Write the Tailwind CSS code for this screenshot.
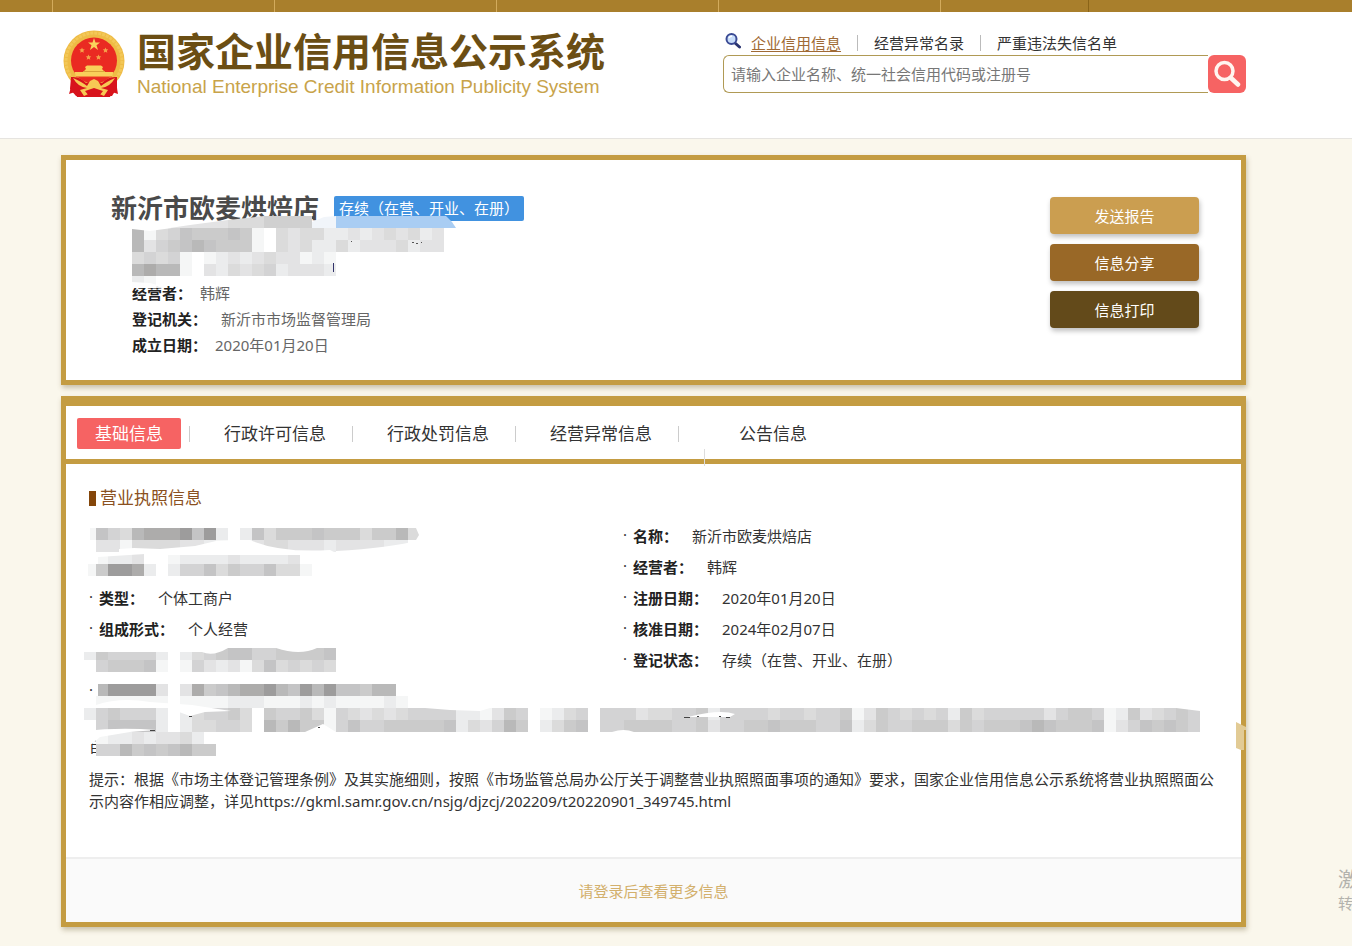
<!DOCTYPE html>
<html lang="zh-CN">
<head>
<meta charset="utf-8">
<meta name="viewport" content="width=device-width, initial-scale=1">
<title>国家企业信用信息公示系统</title>
<script src="https://cdn.jsdelivr.net/npm/@tailwindcss/browser@4"></script>
</head>
<body class="relative min-h-screen overflow-x-hidden bg-[#faf7ec] font-['Noto_Sans','Noto_Sans_CJK_SC',sans-serif] text-[15px] leading-[22px] text-[#333]">

<!-- Top navigation strip -->
<nav class="flex h-3 bg-[#a97f2c] pl-[52px]" aria-label="主导航">
  <span class="w-[222px] border-l border-[#d3ab5c]"></span>
  <span class="w-[222px] border-l border-[#d3ab5c]"></span>
  <span class="w-[222px] border-l border-[#d3ab5c]"></span>
  <span class="w-[222px] border-l border-[#d3ab5c]"></span>
  <span class="w-[149px] border-x border-l-[#d3ab5c] border-r-[#8a6418]"></span>
</nav>

<header class="flex h-[127px] justify-between border-b border-[#e6e4e0] bg-white pr-[106px] pl-[62px]">
  <div class="flex gap-3 pt-[18px]">
    <!-- National emblem -->
    <svg class="h-[70px] w-[63px]" viewBox="0 0 63 70" aria-hidden="true">
      <path d="M9 46 L55 46 C54 53 55 59 56 64 L50 62 L48 67 L15 67 L13 62 L7 64 C9 58 10 52 9 46Z" fill="#d8131c"/>
      <circle cx="32" cy="31" r="30.500" fill="#eebb45"/>
      <circle cx="32" cy="31" r="28" fill="none" stroke="#f3c858" stroke-width="3" stroke-dasharray="3 1"/>
      <path d="M9 47 Q18 46 24 53 L32 50 L40 53 Q46 46 55 47 L55 58 L50 66 L14 66 L8 59Z" fill="#d8131c"/>
      <circle cx="32" cy="30.500" r="23" fill="#ea2a22"/>
      <path d="M32 8 L33.500 12.500 L38 12.500 L34.500 15.200 L36 20 L32 17 L28 20 L29.500 15.200 L26 12.500 L30.500 12.500Z" fill="#fad45c"/>
      <g fill="#f5a24b">
        <path id="s" d="M20 17.500 l.8 1.800 2 .2 -1.500 1.300 .5 2 -1.800 -1.100 -1.800 1.100 .5 -2 -1.500 -1.300 2 -.2z"/>
        <use href="#s" x="6.500" y="7"/><use href="#s" x="16.500" y="7"/><use href="#s" x="23.500"/>
      </g>
      <path d="M23 37 L25 35.500 L39 35.500 L41 37 L40 39 L43 42 L51.500 42 L50 47 L14 47 L12.500 42 L21 42 L24 39Z" fill="#f9cf5a"/>
      <path d="M21 41.500 H43" stroke="#d9a33a"/>
      <path d="M14 47 H50" stroke="#ea3a22"/>
      <path d="M11 48 Q20 52 25 56 L28 51 L32 49 L36 51 L39 56 Q44 52 53 48 Q48 57 39 58 L46 60 L42 66 L37 66 L41 61 L32 58 L23 61 L27 66 L22 66 L18 60 L25 58 Q16 57 11 48Z" fill="#f7c954"/>
      <path d="M22 66 Q32 60 42 66Z" fill="#d8131c"/>
    </svg>
    <div>
      <h1 class="h-[45px] font-['Noto_Sans_CJK_SC',sans-serif] text-[39px] leading-[38px] font-bold whitespace-nowrap text-[#6b4e14]">国家企业信用信息公示系统</h1>
      <p class="font-['Liberation_Sans',sans-serif] text-[19px] leading-[24px] whitespace-nowrap text-[#c8a34a]">National Enterprise Credit Information Publicity System</p>
    </div>
  </div>

  <form class="w-[523px] pt-[18px]">
    <div class="flex h-[25px] items-center pl-0.5 whitespace-nowrap text-[#333]">
      <svg class="mr-[10px] mb-1 size-4" viewBox="0 0 16 16" aria-hidden="true">
        <path d="M10 10 L14.500 14" stroke="#2a3470" stroke-width="3" stroke-linecap="round"/>
        <circle cx="6.500" cy="6" r="5" fill="#c9defa" stroke="#3a4a94" stroke-width="2"/>
        <path d="M4 5 Q5 3 7 3.200" stroke="#fff" stroke-width="1.500" fill="none"/>
      </svg>
      <a href="#" class="text-[#a06a35] underline underline-offset-2">企业信用信息</a>
      <span class="mx-4 h-4 w-px bg-[#bbb]"></span>
      <a href="#">经营异常名录</a>
      <span class="mx-4 h-4 w-px bg-[#bbb]"></span>
      <a href="#">严重违法失信名单</a>
    </div>
    <div class="flex h-[38px]">
      <input type="text" aria-label="搜索企业" placeholder="请输入企业名称、统一社会信用代码或注册号" class="min-w-0 flex-1 rounded-l-md border border-r-0 border-[#b09a55] bg-white px-[7px] outline-none placeholder:text-[#777]">
      <button type="button" aria-label="搜索" class="flex w-[38px] items-center justify-center rounded-md bg-[#f66363]">
        <svg class="size-7" viewBox="0 0 28 28" fill="none" stroke="#fff5f0" aria-hidden="true">
          <circle cx="11.500" cy="11" r="8.500" stroke-width="3.500"/>
          <path d="M18 18 L25 24.500" stroke-width="4.500" stroke-linecap="round"/>
        </svg>
      </button>
    </div>
  </form>
</header>

<main class="pt-4 pr-[106px] pb-[18px] pl-[61px]">

  <!-- Company summary -->
  <section class="relative flex h-[230px] justify-between border-5 border-[#c49c42] bg-white pt-[37px] pr-[42px] pl-[45px] shadow-[1px_3px_5px_rgba(90,70,20,0.3)]">
    <div>
      <div class="flex items-start">
        <h2 class="text-[26px] leading-[22px] font-bold text-[#4a4a4a]">新沂市欧麦烘焙店</h2>
        <span class="-mt-px ml-[15px] h-[25px] rounded-xs bg-[#4192e0] px-[5px] leading-[25px] text-white">存续（在营、开业、在册）</span>
      </div>
      <dl class="mt-[59px] pl-[21px] leading-[26px] text-[#666]">
        <div class="flex"><dt class="font-bold text-[#222]">经营者：</dt><dd class="ml-2">韩辉</dd></div>
        <div class="flex"><dt class="font-bold text-[#222]">登记机关：</dt><dd class="ml-[14px]">新沂市市场监督管理局</dd></div>
        <div class="flex"><dt class="font-bold text-[#222]">成立日期：</dt><dd class="ml-2">2020年01月20日</dd></div>
      </dl>
    </div>
    <div class="flex w-[149px] flex-col gap-[10px] text-white">
      <button type="button" class="h-[37px] rounded-sm bg-[#cb9e50] shadow-[1px_3px_5px_rgba(0,0,0,0.25)]">发送报告</button>
      <button type="button" class="h-[37px] rounded-sm bg-[#996827] shadow-[1px_3px_5px_rgba(0,0,0,0.25)]">信息分享</button>
      <button type="button" class="h-[37px] rounded-sm bg-[#634a1a] shadow-[1px_3px_5px_rgba(0,0,0,0.25)]">信息打印</button>
    </div>
    <!-- Pixelated private fields -->
    <svg class="pointer-events-none absolute top-[56px] left-[66px] h-[72px] w-[336px]" viewBox="132 216 336 72" shape-rendering="crispEdges" aria-hidden="true">
      <g data-x="132" data-y="228" data-rows="2965344434 9.67668878767687|2754323444 9.67688687776877|65659.9878 7677989|21229.7867 6587778|89"></g>
      <g shape-rendering="auto">
        <path d="M170 228 L190 225 L228 220 V228Z" fill="#e3e3e4"/>
        <path d="M228 220 L264 216 V228 H228Z" fill="#dbdbdb"/>
        <path d="M264 216 H312 V228 H264Z" fill="#d0d0d0"/>
        <path d="M312 222 L324 217 L336 216 V228 H312Z" fill="#f1f5fa"/>
        <path d="M336 216 H446 L452 222 L456 228 H336Z" fill="#a9cdf3"/>
        <path d="M132 228 H172 L150 231 L132 229Z" fill="#fff"/>
        <path d="M132 288 V282 L150 283 L168 288Z" fill="#fff" opacity="0.900"/>
      </g>
      <path d="M333 263 V272" stroke="#33336b"/>
      <path d="M351 241 h1 M412 242 h2 M416 243 h2 M421 242 h1" stroke="#555"/>
    </svg>
  </section>

  <!-- Registration details -->
  <section class="relative mt-[11px] border-5 border-t-10 border-[#c49c42] bg-white shadow-[1px_3px_5px_rgba(90,70,20,0.3)]">
    <div class="relative flex h-[58px] items-start border-b-5 border-[#c49c42] pt-3 pl-[11px] text-[17px]" role="tablist">
      <button type="button" role="tab" aria-selected="true" class="h-[31px] w-[104px] rounded-xs bg-[#f66363] text-white">基础信息</button>
      <span class="mt-2 ml-2 h-4 w-px bg-[#ccc]"></span>
      <button type="button" role="tab" class="h-[31px] w-[162px] pl-2">行政许可信息</button>
      <span class="mt-2 h-4 w-px bg-[#ccc]"></span>
      <button type="button" role="tab" class="h-[31px] w-[162px] pl-2">行政处罚信息</button>
      <span class="mt-2 h-4 w-px bg-[#ccc]"></span>
      <button type="button" role="tab" class="h-[31px] w-[162px] pl-2">经营异常信息</button>
      <span class="mt-2 h-4 w-px bg-[#ccc]"></span>
      <button type="button" role="tab" class="h-[31px] w-[188px]">公告信息</button>
      <span class="absolute top-[43px] left-[638px] h-[17px] w-px bg-[#ddd]"></span>
    </div>

    <div class="pt-[22px] pr-[22px] pb-[45px] pl-[23px]">
      <h3 class="flex h-6 items-center gap-1 text-[17px] text-[#8a5020]"><span class="h-[15px] w-[7px] bg-[#84460a]"></span>营业执照信息</h3>
      <div class="mt-[11px] grid grid-cols-[534fr_596fr]">
        <dl class="pt-[62px] pb-[31px] leading-[31px]">
          <div class="flex"><span class="-mt-0.5 w-[10px]">·</span><dt class="font-bold text-[#222]">类型：</dt><dd class="ml-[14px]">个体工商户</dd></div>
          <div class="flex"><span class="-mt-0.5 w-[10px]">·</span><dt class="font-bold text-[#222]">组成形式：</dt><dd class="ml-[14px]">个人经营</dd></div>
          <div class="flex pt-[31px]"><span class="-mt-0.5 w-[10px]">·</span></div>
        </dl>
        <dl class="leading-[31px]">
          <div class="flex"><span class="-mt-0.5 w-[10px]">·</span><dt class="font-bold text-[#222]">名称：</dt><dd class="ml-[14px]">新沂市欧麦烘焙店</dd></div>
          <div class="flex"><span class="-mt-0.5 w-[10px]">·</span><dt class="font-bold text-[#222]">经营者：</dt><dd class="ml-[14px]">韩辉</dd></div>
          <div class="flex"><span class="-mt-0.5 w-[10px]">·</span><dt class="font-bold text-[#222]">注册日期：</dt><dd class="ml-[14px]">2020年01月20日</dd></div>
          <div class="flex"><span class="-mt-0.5 w-[10px]">·</span><dt class="font-bold text-[#222]">核准日期：</dt><dd class="ml-[14px]">2024年02月07日</dd></div>
          <div class="flex"><span class="-mt-0.5 w-[10px]">·</span><dt class="font-bold text-[#222]">登记状态：</dt><dd class="ml-[14px]">存续（在营、开业、在册）</dd></div>
        </dl>
      </div>
      <p class="-mt-[31px] h-[63px] pt-[30px]">目</p>
      <p>提示：根据《市场主体登记管理条例》及其实施细则，按照《市场监管总局办公厅关于调整营业执照照面事项的通知》要求，国家企业信用信息公示系统将营业执照照面公示内容作相应调整，详见https://gkml.samr.gov.cn/nsjg/djzcj/202209/t20220901_349745.html</p>
    </div>

    <div class="flex h-[65px] items-center justify-center border-t-2 border-[#eee] bg-[#fafafa]">
      <a href="#" class="text-[#d3b06c]">请登录后查看更多信息</a>
    </div>

    <!-- Pixelated private fields -->
    <svg class="pointer-events-none absolute top-[122px] left-[18px] h-[228px] w-[1116px]" viewBox="84 528 1116 228" shape-rendering="crispEdges" aria-hidden="true">
      <g data-x="84" data-y="528" data-rows="93562111030 8.8364443444644 26|.77966667789.97667778777788|.9887..98888788887|94001 8.8553645536 69"></g>
      <g data-x="84" data-y="648" data-rows="84555 58.8654335544443|.54443 9.957879636565 6"></g>
      <g data-x="84" data-y="684" data-rows=".200007.714321102302033422|.999999.9999888999898999989|8545558 .865546 .455469 5676765555 889745. 9865. 5557665548 5555655655 497456565 8465555 575445 98476545|.533338 .866556 .242449 5355444443 867524. 8643. 5544445547 5544344455 386455444 6454443 234443 97534345"></g>
      <g data-x="84" data-y="732" data-rows=".988787768|.5524343244"></g>
      <g fill="#fff" shape-rendering="auto">
        <path d="M84 528 H90 V540 H84Z M119 552 V549 L134 548 L160 549 L195 546 L216 541 L240 540 V552Z M250 540 Q280 553 330 550 L334 552 H240 V540Z M336 551 Q390 548 420 540 V552 H336Z M416 528 h4 v12 h-4 l3 -5z"/>
        <path d="M84 552 H145 V554 L98 557 V564 H84Z M168 552 H312 V555 H168Z M84 564 h4 v12 h-4z"/>
        <path d="M84 648 H168 V652 H84Z M180 648 H228 Q213 657 202 652 H180Z M276 648 H317 Q300 656 276 648Z M84 660 h12 v12 h-12z"/>
        <path d="M96 684 h2 v12 h-2z M96 705 Q120 697 150 702 L192 705 L231 711 L205 712 L190 716 L168 708 H84 V705Z M425 708 H490 L480 711 L450 710Z M305 732 L323 724 L336 732Z M84 731 Q120 727 156 730 L130 732 L100 737 L92 744 H84Z M688 717 Q720 709 735 714 L730 717Z M1176 708 H1200 V711Z M612 732 Q624 728 634 732Z"/>
      </g>
      <path d="M189 716 h3 M318 727 h2 M684 717 h6 M697 716 h2 M719 716 h2 M726 717 h4 M150 730 h5" stroke="#444"/>
    </svg>
    <!-- Smudge over the right border -->
    <svg class="absolute top-[316px] -right-[5px] h-[28px] w-[10px]" viewBox="0 0 10 28" aria-hidden="true"><path d="M0 0 L10 5 V8 H8 V28 H5 L0 26Z" fill="#e2cb95"/></svg>
  </section>
</main>

<!-- System watermark running off the window's right edge -->
<aside class="absolute top-[868px] right-0 w-[14px] overflow-hidden text-[#b3b2ad]">
  <p class="w-5 text-[20px] leading-[24px]">激</p>
  <p class="w-5 text-[15px] leading-[22px]">转</p>
</aside>

<script>
  // Each digit is a shade of one 12px mosaic cell; "." leaves the cell empty.
  const shades = ['#9d9c9c', '#adacab', '#b9b9b9', '#c4c4c5', '#cbcbcb', '#d3d3d4', '#dbdbdb', '#e3e3e4', '#ebeced', '#f5f6f6'];
  document.querySelectorAll('g[data-rows]').forEach(g => {
    g.dataset.rows.replaceAll(' ', '').split('|').forEach((row, r) => {
      [...row].forEach((c, i) => {
        if (c === '.') return;
        const cell = document.createElementNS('http://www.w3.org/2000/svg', 'rect');
        cell.setAttribute('x', +g.dataset.x + i * 12);
        cell.setAttribute('y', +g.dataset.y + r * 12);
        cell.setAttribute('width', 12);
        cell.setAttribute('height', 12);
        cell.setAttribute('fill', shades[c]);
        g.append(cell);
      });
    });
  });
</script>
</body>
</html>
